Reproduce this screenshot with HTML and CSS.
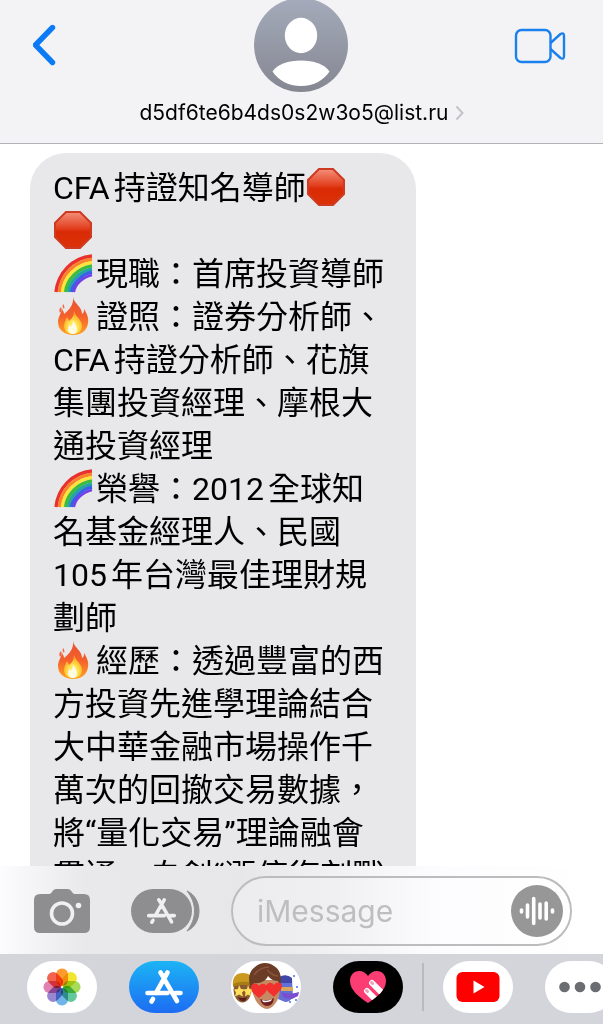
FILE: index.html
```html
<!DOCTYPE html>
<html lang="zh-Hant">
<head>
<meta charset="utf-8">
<meta name="viewport" content="width=device-width, initial-scale=1">
<title>iMessage</title>
<link rel="stylesheet" href="styles.css">
</head>
<body>
<svg class="defs" aria-hidden="true">
  <defs>
    <linearGradient id="stopFill" x1="0" y1="0" x2="0" y2="1">
      <stop offset="0" stop-color="#f4907a"/><stop offset=".45" stop-color="#e2401f"/><stop offset=".55" stop-color="#d92a05"/><stop offset="1" stop-color="#dc3208"/>
    </linearGradient>
    <linearGradient id="flameFill" x1="0" y1="0" x2="0" y2="1">
      <stop offset="0" stop-color="#e8502f"/><stop offset=".5" stop-color="#f4602c"/><stop offset="1" stop-color="#ffa21f"/>
    </linearGradient>
    <radialGradient id="flameCore" cx=".5" cy=".75" r=".6">
      <stop offset="0" stop-color="#fff6b0"/><stop offset=".5" stop-color="#ffe14a"/><stop offset="1" stop-color="#ffa52b"/>
    </radialGradient>
    <symbol id="stop" viewBox="0 0 40 40">
      <path d="M13 2h14l11 11v14l-11 11h-14l-11-11v-14z" fill="url(#stopFill)" stroke="#cf3a22" stroke-width="2"/>
    </symbol>
    <symbol id="rainbow" viewBox="0 0 40 40">
      <g fill="none" stroke-width="3.400">
        <path d="M3 39C5 20 19 5 39 3" stroke="#e8302e"/>
        <path d="M6.200 39C8 22 21 8.400 39 6.300" stroke="#f9822c"/>
        <path d="M9.400 39C11 24 23 11.600 39 9.600" stroke="#fde43a"/>
        <path d="M12.600 39C14 26 25 15 39 12.900" stroke="#3dbb3b"/>
        <path d="M15.600 39C17 28 27 18 39 16.200" stroke="#23a6a0"/>
        <path d="M18.400 39C20 30 29 21 39 19.200" stroke="#3b5fe8"/>
        <path d="M21 39C22 31 30 24 39 22" stroke="#7440e6" stroke-width="2.400"/>
      </g>
    </symbol>
    <symbol id="fire" viewBox="0 0 40 40">
      <path d="M20 1c1 7 9 9 9 17 2-1 2-3 2-5 3 5 5 9 4 14-1 8-7 12-15 12S5 34 5 26c0-5 3-8 4-13 1 2 2 3 2 5C16 14 21 9 20 1z" fill="url(#flameFill)"/>
      <path d="M8 11c-2 2-2 4-1 6 2-2 2-4 1-6zM10 8c1 1 2 3 1 5-1-1-2-3-1-5z" fill="#f0653c"/>
      <path d="M21 14c0 6 8 9 8 16 0 5-4 8-9 8s-9-3-9-8c0-4 2-6 3-9l2 4c4-3 5-6 5-11z" fill="url(#flameCore)"/>
      <path d="M20 24c1 3 4 5 4 9s-2 5-4 5-5-1-5-5c0-2 1-3 2-4l1 2c1-2 2-4 2-7z" fill="#fffbe3"/>
    </symbol>
    <symbol id="store" viewBox="0 0 40 36">
      <g fill="none" stroke="currentColor" stroke-width="4.600" stroke-linecap="round">
        <path d="M16.500 3.500l2.500 4M23.500 3.500L12 24M3.500 24h20M31.500 24h5M20.500 10.500L33 32M9 30l-1.500 2.500"/>
      </g>
    </symbol>
  </defs>
</svg>

<header class="top">
  <button class="plain back" aria-label="返回">
    <svg width="24" height="44" viewBox="2 0 24 44"><path d="M21.500 4.500L4.500 22l17 17.500" fill="none" stroke="#0a7bf5" stroke-width="5.400" stroke-linecap="round" stroke-linejoin="round"/></svg>
  </button>
  <button class="plain contact">
    <svg width="94" height="92" viewBox="0 2 94 92" aria-hidden="true">
      <defs><linearGradient id="avatar" x1="0" y1="0" x2="0" y2="1"><stop offset="0" stop-color="#a5abbb"/><stop offset="1" stop-color="#858791"/></linearGradient></defs>
      <circle cx="47" cy="47" r="47" fill="url(#avatar)"/>
      <ellipse cx="47" cy="37.500" rx="16.200" ry="17.700" fill="#fff"/>
      <path d="M18.500 73.500C24 66 34 62.500 47 62.500s23 3.500 28.500 11C70 82 60 88 47 88S24 82 18.500 73.500z" fill="#fff"/>
    </svg>
    <span class="address">d5df6te6b4ds0s2w3o5@list.ru<svg width="9" height="16" viewBox="0 0 9 16" aria-hidden="true"><path d="M1.500 1.500L7.500 8l-6 6.500" fill="none" stroke="#c4c4c8" stroke-width="2"/></svg></span>
  </button>
  <button class="plain video" aria-label="視訊通話">
    <svg width="56" height="36" viewBox="0 0 56 36"><g fill="none" stroke="#1a80ee" stroke-width="2.400" stroke-linejoin="round"><rect x="2" y="2" width="34.500" height="32" rx="5.500"/><path d="M36.500 15l10-9q3.500-2 3.500 2v20q0 4-3.500 2l-10-9"/></g></svg>
  </button>
</header>

<main class="thread">
  <p class="bubble">CFA持證知名導師<svg class="emoji" role="img" aria-label="停止"><use href="#stop"/></svg><br>
<svg class="emoji" role="img" aria-label="停止"><use href="#stop"/></svg><br>
<svg class="emoji" role="img" aria-label="彩虹"><use href="#rainbow"/></svg>現職：首席投資導師<br>
<svg class="emoji" role="img" aria-label="火"><use href="#fire"/></svg>證照：證券分析師、<br>CFA持證分析師、花旗集團投資經理、摩根大通投資經理<br>
<svg class="emoji" role="img" aria-label="彩虹"><use href="#rainbow"/></svg>榮譽：2012全球知名基金經理人、民國<br>105年台灣最佳理財規劃師<br>
<svg class="emoji" role="img" aria-label="火"><use href="#fire"/></svg>經歷：透過豐富的西方投資先進學理論結合大中華金融市場操作千萬次的回撤交易數據，將“量化交易”理論融會貫通，自創“漲停復刻戰</p>
</main>

<form class="composer">
  <button type="button" class="plain" aria-label="相機">
    <svg width="56" height="44" viewBox="0 0 56 44"><path d="M6 5h9q2 0 3-2 1.500-3 4-3h12q2.500 0 4 3 1 2 3 2h9q6 0 6 6v27q0 6-6 6H6q-6 0-6-6V11q0-6 6-6z" fill="#8e8e90"/><circle cx="28" cy="24.500" r="10.500" fill="none" stroke="#f0f0f2" stroke-width="3.600"/><circle cx="44.500" cy="16.500" r="2.800" fill="#f0f0f2"/></svg>
  </button>
  <button type="button" class="plain apps" aria-label="App">
    <svg width="70" height="44" viewBox="0 0 70 44"><path d="M22 0h17a22 22 0 0 1 0 44H22a22 22 0 0 1 0-44z" fill="#8e8e90"/><path d="M56 2c16 7 16 33 0 40 10-12 10-28 0-40z" fill="#8e8e90" stroke="#8e8e90"/><use href="#store" x="15" y="8" width="31" height="28" color="#efeff1"/></svg>
  </button>
  <div class="field">
    <input type="text" placeholder="iMessage" aria-label="iMessage">
    <button type="button" class="plain" aria-label="錄音">
      <svg width="52" height="52" viewBox="0 0 52 52"><circle cx="26" cy="26" r="26" fill="#979797"/><g stroke="#fff" stroke-width="3.600" stroke-linecap="round"><path d="M10.500 25v2M16.500 20v12M22.700 13.500v25M29 19v14M35.200 18v16M41.500 25v2"/></g></svg>
    </button>
  </div>
</form>

<nav class="drawer" aria-label="iMessage App">
  <button class="app" aria-label="照片">
    <svg width="38" height="38" viewBox="-19 -19 38 38"><g class="petals">
      <rect x="-6" y="-18.500" width="12" height="17.500" rx="5.800" fill="#ff9b2e"/>
      <rect x="-6" y="-18.500" width="12" height="17.500" rx="5.800" fill="#f2e52e" transform="rotate(45)"/>
      <rect x="-6" y="-18.500" width="12" height="17.500" rx="5.800" fill="#a6dc5a" transform="rotate(90)"/>
      <rect x="-6" y="-18.500" width="12" height="17.500" rx="5.800" fill="#62c79a" transform="rotate(135)"/>
      <rect x="-6" y="-18.500" width="12" height="17.500" rx="5.800" fill="#70b4ea" transform="rotate(180)"/>
      <rect x="-6" y="-18.500" width="12" height="17.500" rx="5.800" fill="#9a86d0" transform="rotate(225)"/>
      <rect x="-6" y="-18.500" width="12" height="17.500" rx="5.800" fill="#df82b2" transform="rotate(270)"/>
      <rect x="-6" y="-18.500" width="12" height="17.500" rx="5.800" fill="#f26350" transform="rotate(315)"/>
    </g></svg>
  </button>
  <button class="app store" aria-label="App Store"><svg width="40" height="36"><use href="#store"/></svg></button>
  <button class="app" aria-label="Memoji">
    <svg width="70" height="52" viewBox="0 0 70 52">
      <ellipse cx="11.500" cy="29" rx="9" ry="12.500" fill="#8a5a33"/>
      <path d="M2 25C1 16 5 12 12 12c6 0 9 3 9 7v6q-9-3-19 0z" fill="#c99a1e"/><path d="M2 23q9-4 19-1v3q-9-3-19 1z" fill="#a87b13"/>
      <path d="M8 24l2 4 4 .5-3 3 1 4-4-2-4 2 1-4-2-3 4-.5zM17 24l1.500 4 3.500.5-2.500 3 .5 4-3-2-3 2 .500-4-2-3 3.500-.5z" fill="#ffe05a"/>
      <path d="M7 36q5 2 9 0-1 5-5 4-3-1-4-4z" fill="#5b1d18"/>
      <path d="M48 17q8-5 13 1l1 18q-3 5-8 5l-7-3z" fill="#6270d8"/><path d="M48 16q7-4 13 1v5H48z" fill="#4047a8"/><path d="M50 26h12v4H50z" fill="#d9a65a"/><path d="M50 31q7 3 14 1l4-1-1 4-6 3-8-1z" fill="#7b4ed0"/>
      <g fill="#4a72e8"><circle cx="63" cy="15" r="1"/><circle cx="66" cy="26" r="1"/><circle cx="59" cy="41" r="1"/><circle cx="65" cy="39" r="1"/></g>
      <path d="M21 19h28c1 6 0 15-3 21-3 5-7 8-10 8s-8-3-11-8c-4-7-5-15-4-21z" fill="#c58a64"/>
      <path d="M20 28c-3-8-3-17 4-22C29 1 38 1 43 5c7 4 8 12 6 22l-2-7c-4 0-8-2-10-5-2 5-8 8-14 7z" fill="#6b3d27"/>
      <path d="M23 14Q29 6 38 6M36 9q6 6 11 6" fill="none" stroke="#8d553a" stroke-width="1.300"/>
      <path d="M29 38q7 3 14-1-1 8-7 8-5 0-7-7z" fill="#701e20"/><path d="M31 39q5 2 10-1l-1 2q-5 2-8 1z" fill="#fff"/>
      <path d="M28 37c-5-4-8-6-8-11 0-4 6-5 8-1 3-4 8-2 8 2 0 4-4 7-8 10zM43 36c-4-4-8-6-8-10 0-4 5-6 8-2 2-4 8-3 8 1s-5 7-8 11z" fill="#f2302d"/>
    </svg>
  </button>
  <button class="app touch" aria-label="Digital Touch">
    <svg width="38" height="34" viewBox="0 0 38 34"><defs><clipPath id="heart"><path d="M19 33C10 27 1 20 1 11 1 5 5 1 10 1c4 0 7 2 9 5 2-3 5-5 9-5 5 0 9 4 9 10 0 9-9 16-18 22z"/></clipPath></defs>
      <g clip-path="url(#heart)"><path d="M0 0h38v34H0z" fill="#fb3d73"/><g stroke="#fff" stroke-width="6" stroke-linecap="round"><path d="M23 13l13 13M18 21l13 13"/></g><path d="M22.500 12.500l1 1M17.500 20.500l1 1" stroke="#ef9eb7" stroke-width="3" stroke-linecap="round"/></g></svg>
  </button>
  <span class="divider"></span>
  <button class="app" aria-label="YouTube">
    <svg width="44" height="32" viewBox="0 0 44 32"><rect x=".5" y="1" width="43" height="30" rx="6" fill="#f00"/><path d="M17.500 9.500v13l11-6.500z" fill="#fff"/></svg>
  </button>
  <button class="app" aria-label="更多">
    <svg width="42" height="12" viewBox="0 0 42 12" fill="#6c6d72"><circle cx="5.500" cy="6" r="5.300"/><circle cx="21" cy="6" r="5.300"/><circle cx="36.500" cy="6" r="5.300"/></svg>
  </button>
</nav>
</body>
</html>
```

FILE: styles.css
```css
* {
  box-sizing: border-box;
}

body {
  display: flex;
  flex-direction: column;
  height: 100vh;
  margin: 0;
  overflow: hidden;
  background: #fff;
  color: #000;
  font-family: Roboto, "Noto Sans CJK TC", sans-serif;
}

svg {
  display: block;
  flex: none;
}

.defs {
  position: absolute;
  width: 0;
  height: 0;
}

.plain {
  padding: 0;
  border: 0;
  background: none;
  color: inherit;
  font: inherit;
}

.top {
  display: grid;
  grid-template-columns: 1fr auto 1fr;
  align-items: start;
  flex: none;
  padding: 0 33px 17px;
  border-bottom: 1px solid #b2b2b6;
  background: #f3f3f5;
}

.back {
  justify-self: start;
  margin-top: 23px;
}

.video {
  justify-self: end;
  margin-top: 28px;
}

.contact {
  display: flex;
  flex-direction: column;
  align-items: center;
  gap: 8px;
}

.address {
  display: flex;
  align-items: center;
  gap: 6px;
  font-family: Inter, sans-serif;
  font-size: 21px;
  line-height: 26px;
}

.thread {
  flex: 1;
  min-height: 0;
  overflow: hidden;
  padding: 9px 31% 0 30px;
}

.bubble {
  margin: 0;
  padding: 14px 23px 56px;
  border-radius: 36px;
  background: #e8e8ea;
  font-size: 32px;
  line-height: 43px;
  text-autospace: normal;
}

.emoji {
  display: inline-block;
  width: 40px;
  height: 40px;
  margin: -4px 3px -4px 0;
  vertical-align: -4px;
}

.composer {
  display: flex;
  align-items: center;
  flex: none;
  padding: 10px 31px 8px 34px;
  background: linear-gradient(90deg, #fcfcfe 0%, #e9e9eb 14%, #e7e7e9 40%, #fcfcfe 72%, #fff 100%);
}

.apps {
  margin: 0 30px 0 41px;
}

.field {
  display: flex;
  align-items: center;
  flex: 1;
  min-width: 0;
  height: 70px;
  padding: 0 7px 0 24px;
  border: 2px solid #bcbcbe;
  border-radius: 35px;
  background: linear-gradient(90deg, #ececee 0%, #f0f0f2 30%, #fcfcfe 60%, #fff 100%);
}

.field input {
  flex: 1;
  min-width: 0;
  padding: 0;
  border: 0;
  outline: 0;
  background: none;
  font-family: Inter, sans-serif;
  font-size: 30px;
}

.field input::placeholder {
  color: #bebec1;
}

.drawer {
  display: flex;
  align-items: center;
  flex: none;
  gap: 32px;
  height: 70px;
  padding: 0 0 4px 27px;
  overflow: hidden;
  background: #d4d5db;
}

.app {
  display: flex;
  align-items: center;
  justify-content: center;
  flex: none;
  width: 70px;
  height: 52px;
  padding: 0;
  border: 0;
  border-radius: 26px;
  background: #fff;
}

.store {
  background: linear-gradient(#1cb4f5, #1d6cf2);
  color: #fff;
}

.touch {
  background: #000;
}

.divider {
  flex: none;
  width: 2px;
  height: 48px;
  margin: 0 -13px;
  background: #b9bac0;
}

.petals rect {
  mix-blend-mode: multiply;
}
```
